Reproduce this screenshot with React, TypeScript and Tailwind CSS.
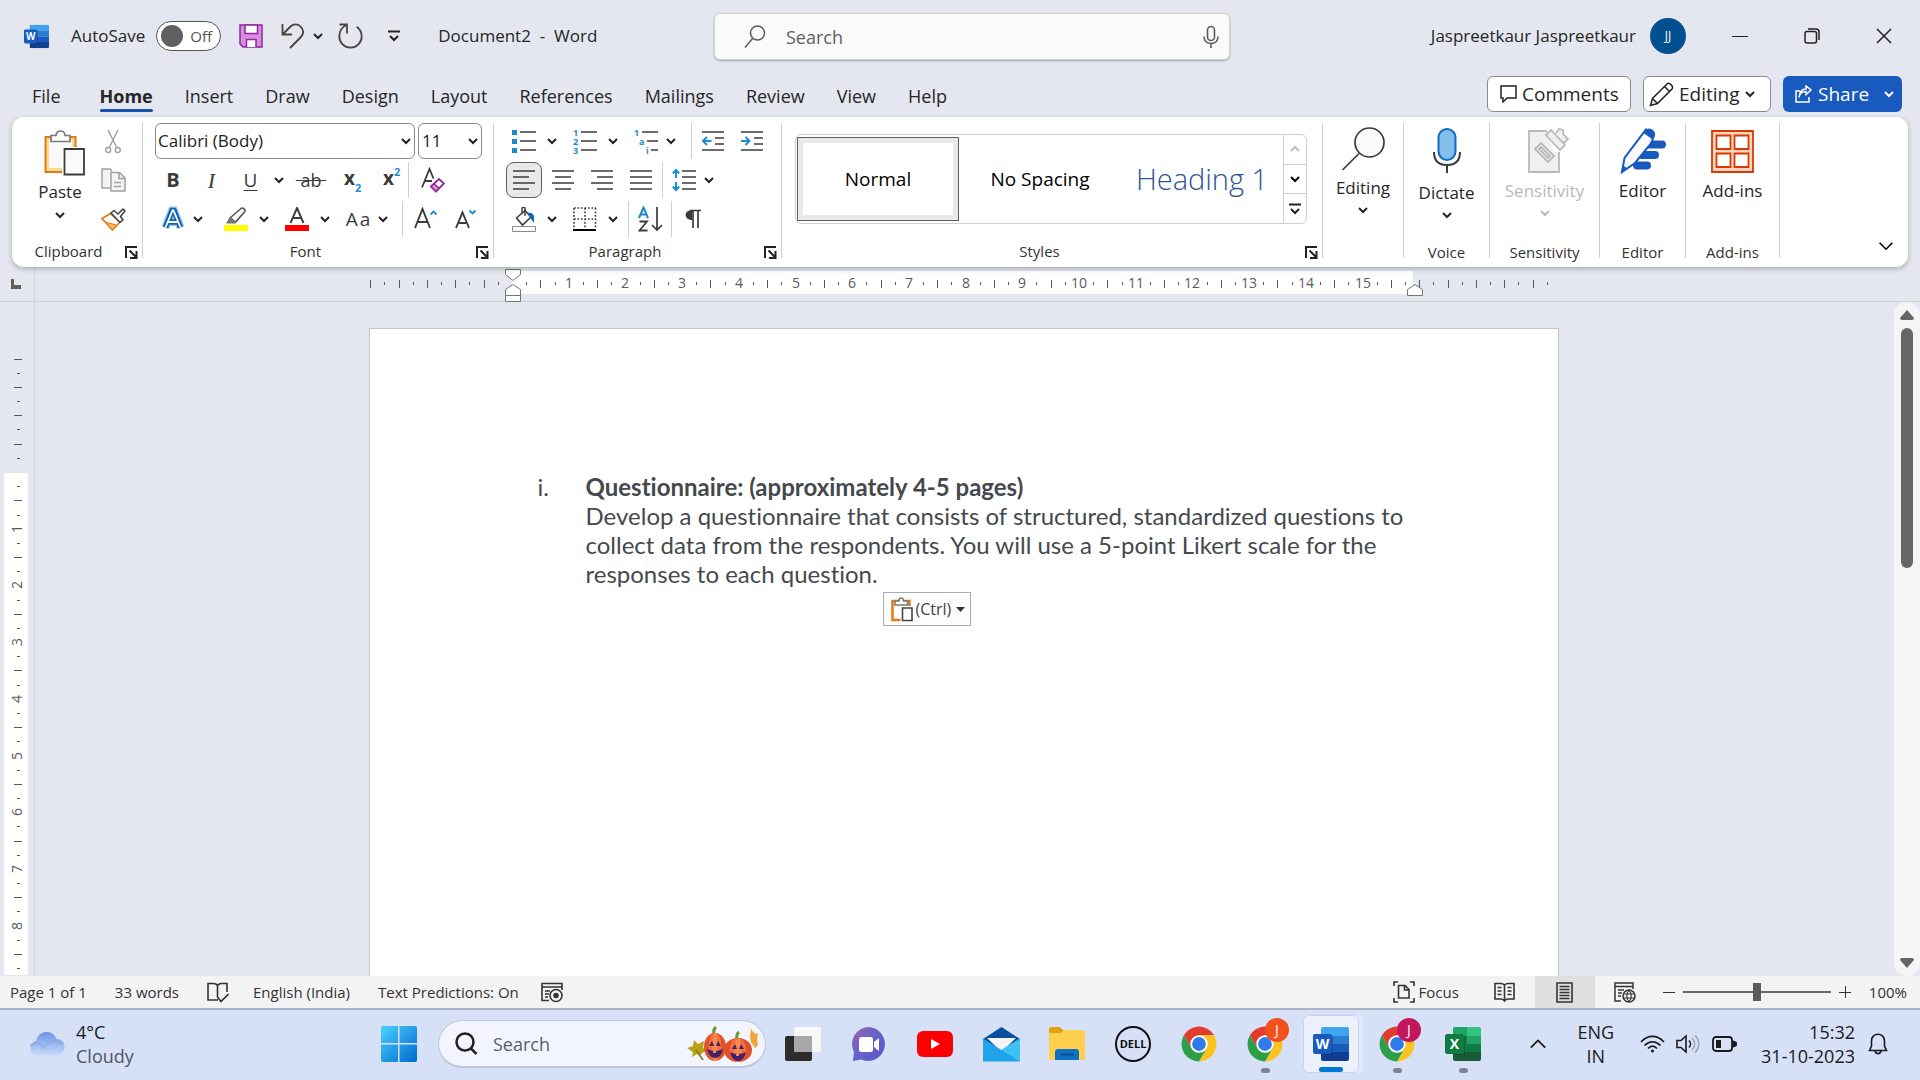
import { useState, type ReactNode } from 'react';
import clsx from 'clsx';

const INK = '#3b3b3b';
const BLUE = '#1e8bcd';

const tabs = [
  'File',
  'Home',
  'Insert',
  'Draw',
  'Design',
  'Layout',
  'References',
  'Mailings',
  'Review',
  'View',
  'Help',
];

/* ---------- small building blocks ---------- */

function Chevron({ className = '', size = 10, up = false, width = 2 }: { className?: string; size?: number; up?: boolean; width?: number }) {
  return (
    <svg
      className={clsx('shrink-0', className)}
      width={size}
      height={size}
      viewBox="0 0 10 10"
      fill="none"
      stroke="currentColor"
      strokeWidth={width}
    >
      <path d={up ? 'M1 7l4-4 4 4' : 'M1 3l4 4 4-4'} />
    </svg>
  );
}

function Tool({ label, className = 'w-9', children }: { label: string; className?: string; children: ReactNode }) {
  return (
    <button
      type="button"
      aria-label={label}
      className={clsx('flex h-9 shrink-0 items-center justify-center rounded-lg text-[#3b3b3b] hover:bg-gray-100', className)}
    >
      {children}
    </button>
  );
}

function More({ label, className = 'w-5' }: { label: string; className?: string }) {
  return (
    <button type="button" aria-label={label} className={clsx('flex h-9 shrink-0 items-center justify-center text-[#222]', className)}>
      <Chevron />
    </button>
  );
}

function Rule({ className = '' }: { className?: string }) {
  return <span className={clsx('h-9 w-px shrink-0 bg-[#d0d0d0]', className)} />;
}

function Launcher({ label }: { label: string }) {
  return (
    <button type="button" aria-label={label} className="mr-1 shrink-0">
      <svg width="13" height="13" viewBox="0 0 13 13" fill="none" stroke="#222" strokeWidth="2">
        <path d="M1 12V1h11M4.500 4.500l6.500 6.500M11.500 5v7H5" />
      </svg>
    </button>
  );
}

function Group({
  title,
  className,
  labelClass,
  launcher,
  children,
}: {
  title?: string;
  className: string;
  labelClass?: string;
  launcher?: boolean;
  children: ReactNode;
}) {
  return (
    <section className={clsx('flex shrink-0 flex-col border-r border-[#d0d0d0]', className)}>
      <div className="flex-1">{children}</div>
      <div className="flex h-3 items-center">
        <span className={clsx('flex-1 text-center text-[15px] leading-3 text-[#333]', labelClass)}>{title}</span>
        {launcher && <Launcher label={`${title} settings`} />}
      </div>
    </section>
  );
}

/* ---------- logos ---------- */

function OfficeLogo({ size, letter }: { size: number; letter: 'W' | 'X' }) {
  const word = letter === 'W';
  const c = word ? ['#41a5ee', '#2b7cd3', '#185abd', '#103f91'] : ['#33c481', '#21a366', '#107c41', '#185c37'];
  return (
    <svg width={size} height={size} viewBox="0 0 36 36">
      <clipPath id={`sheet${letter}${size}`}>
        <rect x="8" y="1" width="28" height="34" rx="2" />
      </clipPath>
      <g clipPath={`url(#sheet${letter}${size})`}>
        <rect x="8" y="1" width="28" height="9" fill={c[0]} />
        <rect x="8" y="10" width="28" height="8" fill={c[1]} />
        <rect x="8" y="18" width="28" height="8" fill={c[2]} />
        <rect x="8" y="26" width="28" height="9" fill={c[3]} />
        {!word && <rect x="8" y="1" width="14" height="9" fill="#21a366" />}
        {!word && <rect x="8" y="10" width="14" height="16" fill="#107c41" />}
        <rect x="8" y="9" width="12" height="20" fill="#000" opacity=".2" />
      </g>
      <rect x="0" y="8" width="19" height="20" rx="2" fill={word ? '#185abd' : '#107c41'} />
      <text x="9.500" y="23" textAnchor="middle" fontSize="14" fontWeight="700" fill="#fff" fontFamily="Open Sans, sans-serif">
        {letter}
      </text>
    </svg>
  );
}

function ChromeLogo({ badge }: { badge?: string }) {
  return (
    <span className="relative block">
      <svg width="38" height="38" viewBox="0 0 48 48">
        <path fill="#e33b2e" d="M4.950 13A22 22 0 0 1 43.050 13H24L14.470 29.500Z" />
        <path fill="#fcc31e" d="M43.050 13A22 22 0 0 1 24 46L33.530 29.500 24 13Z" />
        <path fill="#2c9f47" d="M24 46A22 22 0 0 1 4.950 13L14.470 29.500H33.530Z" />
        <circle cx="24" cy="24" r="11" fill="#fff" />
        <circle cx="24" cy="24" r="8.700" fill="#2f7bee" />
      </svg>
      {badge && (
        <span
          className={clsx(
            'absolute -top-[7px] left-[19px] flex size-6 items-center justify-center rounded-full text-sm text-white',
            badge
          )}
        >
          J
        </span>
      )}
    </span>
  );
}

function Pumpkin({ x, y, rx, ry }: { x: number; y: number; rx: number; ry: number }) {
  return (
    <g>
      <path d={`M${x - 1} ${y - ry + 2}q-1-6 2-8`} stroke="#6a9a2b" strokeWidth="3" fill="none" />
      <ellipse cx={x} cy={y} rx={rx} ry={ry} fill="#e2502a" />
      <ellipse cx={x} cy={y} rx={rx * 0.6} ry={ry} fill="#f26f3c" />
      <ellipse cx={x} cy={y} rx={rx * 0.25} ry={ry} fill="#fa8a50" />
      <path d={`M${x - 6} ${y - 1}l3-5 2 5zM${x + 6} ${y - 1}l-3-5-2 5zM${x - 8} ${y + 2}q8 4 16 0-2 9-8 9t-8-9z`} fill="#47206b" />
      <path d={`M${x - 2} ${y + 4}h3v2h-3z`} fill="#fa8a50" />
    </g>
  );
}

/* ---------- title bar and tabs ---------- */

function TitleBar() {
  return (
    <header className="grid h-[72px] grid-cols-[1fr_516px_1fr] pl-6 text-[17px] text-[#262626]">
      <div className="flex h-[72px] items-center">
        <OfficeLogo size={25} letter="W" />
        <label className="ml-[22px] flex items-center gap-[11px]">
          AutoSave
          <input type="checkbox" className="peer sr-only" />
          <span className="flex h-[30px] w-[65px] items-center gap-[7px] rounded-full border border-[#555] bg-white pl-1 text-[15px] text-[#555]">
            <span className="size-[22px] rounded-full bg-[#606060]" />
            Off
          </span>
        </label>
        <button type="button" aria-label="Save" className="ml-[18px]">
          <svg width="24" height="24" viewBox="0 0 24 24" stroke="#9424a0" strokeWidth="1.500">
            <path d="M1 1h22v22H4l-3-3z" fill="#d68fdc" />
            <path d="M6 1h12.500v8.500H6z" fill="#fff" />
            <path d="M7.500 23v-7.500H17V23" fill="#fff" />
          </svg>
        </button>
        <button type="button" aria-label="Undo" className="ml-[18px] text-[#444]">
          <svg width="24" height="26" viewBox="0 0 24 26" fill="none" stroke="currentColor" strokeWidth="1.800">
            <path d="M1.500 1v10.500H11M2 11l7.500-7.500C12.500 .800 17 .500 20 4c3 3.500 2.500 7.500-.500 10.500L9 25" />
          </svg>
        </button>
        <button type="button" aria-label="Undo history" className="ml-2">
          <Chevron />
        </button>
        <button type="button" aria-label="Redo" className="ml-[15px] text-[#444]">
          <svg width="25" height="26" viewBox="0 0 25 26" fill="none" stroke="currentColor" strokeWidth="1.800">
            <path d="M1.500 1.500H9v9M9 1.800C4 4 1.300 8.500 1.300 13.500a11.200 11.200 0 0 0 22.400 0c0-4-2-7.500-5-9.700" />
          </svg>
        </button>
        <button type="button" aria-label="Customize toolbar" className="ml-[25px]">
          <svg width="12" height="12" viewBox="0 0 12 12" fill="none" stroke="#222" strokeWidth="2">
            <path d="M0 1.500h12M2 6l4 4 4-4" />
          </svg>
        </button>
        <span className="ml-[38px] whitespace-pre">Document2  -  Word</span>
      </div>
      <label className="mt-[13px] flex h-[47px] items-center rounded-md border border-[#d2d2d6] bg-[#fafafa] pl-[29px] pr-[10px] shadow-[0_1px_2px_rgba(0,0,0,0.3)]">
        <svg width="22" height="24" viewBox="0 0 22 24" fill="none" stroke="#5c5c5c" strokeWidth="1.500">
          <circle cx="13.500" cy="8" r="7" />
          <path d="M8.500 13.500L1 22.500" />
        </svg>
        <input
          type="text"
          aria-label="Search"
          placeholder="Search"
          className="ml-5 min-w-0 flex-1 bg-transparent text-lg outline-none placeholder:text-[#616161]"
        />
        <button type="button" aria-label="Dictate a search">
          <svg width="16" height="24" viewBox="0 0 16 24" fill="none" stroke="#5c5c5c" strokeWidth="1.600">
            <rect x="4.500" y="1.500" width="7" height="14" rx="3.500" />
            <path d="M1 11.500c0 4.500 3 7 7 7s7-2.500 7-7M8 18.500V23" />
          </svg>
        </button>
      </label>
      <div className="flex h-[72px] items-center justify-end">
        <span>Jaspreetkaur Jaspreetkaur</span>
        <button type="button" className="ml-[14px] mr-[18px] size-9 rounded-full bg-[#00508f] text-xs text-white">
          JJ
        </button>
        <button type="button" aria-label="Minimize" className="flex h-full w-[72px] items-center justify-center">
          <span className="h-px w-4 bg-[#222]" />
        </button>
        <button type="button" aria-label="Restore" className="flex h-full w-[72px] items-center justify-center">
          <svg width="16" height="16" viewBox="0 0 16 16" fill="none" stroke="#222" strokeWidth="1.500">
            <rect x="1" y="3.500" width="11.500" height="11.500" rx="2" />
            <path d="M4 1h8c2 0 3 1 3 3v8" />
          </svg>
        </button>
        <button type="button" aria-label="Close" className="flex h-full w-[72px] items-center justify-center">
          <svg width="16" height="16" viewBox="0 0 16 16" stroke="#222" strokeWidth="1.500">
            <path d="M1 1l14 14M15 1L1 15" />
          </svg>
        </button>
      </div>
    </header>
  );
}

function TabRow({ active, onSelect }: { active: string; onSelect: (tab: string) => void }) {
  return (
    <div className="flex h-[45px] items-start justify-between pl-4 pr-[18px] text-[#262626]">
      <nav className="flex pt-3 text-lg">
        {tabs.map((tab) => (
          <button
            key={tab}
            type="button"
            onClick={() => onSelect(tab)}
            className={clsx('px-4 leading-6', tab === 'File' && 'mr-[7px]', tab === active && 'font-bold')}
          >
            {tab}
            <span className={clsx('mt-px block h-[3px] rounded-full', tab === active && 'bg-[#1753ad]')} />
          </button>
        ))}
      </nav>
      <div className="flex gap-3 pt-1 text-[19px]">
        <button type="button" className="flex h-9 w-36 items-center gap-1 rounded-md border border-[#8a8a8a] bg-white pl-3">
          <svg width="18" height="18" viewBox="0 0 18 18" fill="none" stroke="#222" strokeWidth="1.500">
            <path d="M1 1h15v12H7l-4 4v-4H1z" />
          </svg>
          Comments
        </button>
        <button type="button" className="flex h-9 w-32 items-center gap-[5px] rounded-md border border-[#8a8a8a] bg-white pl-[5px]">
          <svg width="25" height="25" viewBox="0 0 25 25" fill="none" stroke="#222" strokeWidth="1.500">
            <path d="M1.500 23.500l2-7L18 2c2-2 7 2 5 5L8.500 21.500zM15.500 4.500l5 5M3.500 16.500l5 5" />
          </svg>
          Editing
          <Chevron />
        </button>
        <button type="button" className="flex h-9 w-[119px] items-center gap-[6px] rounded-md bg-[#185abd] pl-3 text-white">
          <svg width="17" height="18" viewBox="0 0 17 18" fill="none" stroke="currentColor" strokeWidth="1.500">
            <path d="M5 6H1v11h13v-5" />
            <path d="M4 12.500c.500-4 3-6 7-6V9.500l5-4.500-5-4v3C7 4 4.500 7 4 12.500z" />
          </svg>
          Share
          <Chevron className="ml-[9px]" />
        </button>
      </div>
    </div>
  );
}

/* ---------- ribbon ---------- */

function ClipboardGroup() {
  return (
    <Group title="Clipboard" launcher className="w-[131px]" labelClass="pb-[2px]">
      <div className="flex pl-[9px]">
        <button type="button" className="flex w-[78px] flex-col items-center pt-[7px] text-[17px] text-[#262626]">
          <svg className="ml-2" width="41" height="46" viewBox="0 0 41 46">
            <path d="M1.500 7h30v35h-30z" fill="#fbdb8f" stroke="#e07a17" strokeWidth="2" />
            <path d="M5 10h23v28H5z" fill="#fafafa" />
            <path d="M7 11.500V5.500h5c0-6 9-6 9 0h5v6z" fill="#fff" stroke="#7a7a7a" strokeWidth="1.700" />
            <path d="M18 17h23v29H18z" fill="#fff" />
            <path d="M20.500 19h19.500v25.500H20.500z" fill="#fafafa" stroke="#3b3b3b" strokeWidth="1.800" />
          </svg>
          <span className="mt-1 leading-6">Paste</span>
          <Chevron className="mt-[6px]" />
        </button>
        <div className="ml-px flex w-[26px] flex-col gap-[3px]">
          <Tool label="Cut" className="w-[26px]">
            <svg width="16" height="25" viewBox="0 0 16 25" fill="none" stroke="#a0a0a0" strokeWidth="1.500">
              <path d="M3 1l8.500 17M13 1L4.500 18" />
              <circle cx="3.200" cy="21" r="2.500" />
              <circle cx="12.800" cy="21" r="2.500" />
            </svg>
          </Tool>
          <Tool label="Copy" className="w-[26px]">
            <svg width="25" height="24" viewBox="0 0 25 24" fill="#f4f4f4" stroke="#a0a0a0" strokeWidth="1.500">
              <path d="M9 20H1V1h8l2 2" />
              <path d="M10 4.500h8.500L24 10v13H10z" />
              <path d="M18 5v5.500h5.500M13 14.500h7M13 18.500h7" fill="none" />
            </svg>
          </Tool>
          <Tool label="Format Painter" className="w-[26px]">
            <svg width="25" height="23" viewBox="0 0 25 23" strokeLinejoin="round">
              <path d="M9.500 5.500L1 10.500l10.500 11.500 7.500-8z" fill="#fff" stroke="#e07a17" strokeWidth="1.700" />
              <path d="M4 14l11.500 3-4 4.500z" fill="#f9b75e" stroke="#e07a17" />
              <path d="M10 5l3-2.500 4 3.500 5-5 2 2-4.500 5.500L22 12l-3 2.500z" fill="#fff" stroke="#444" strokeWidth="1.600" />
            </svg>
          </Tool>
        </div>
      </div>
    </Group>
  );
}

function FontGroup() {
  return (
    <Group title="Font" launcher className="w-[351px]" labelClass="pb-[2px] pr-2">
      <div className="flex flex-col gap-[3px]">
        <div className="flex gap-[3px] pl-3 text-[17px] text-[#222]">
          <label className="relative flex h-9 w-[260px] items-center">
            <select aria-label="Font" className="h-9 w-full appearance-none rounded-md border border-[#8a8a8a] bg-white pl-[2px]">
              <option>Calibri (Body)</option>
            </select>
            <Chevron className="pointer-events-none absolute right-1" />
          </label>
          <label className="relative flex h-9 w-16 items-center">
            <select aria-label="Font size" className="h-9 w-full appearance-none rounded-md border border-[#8a8a8a] bg-white pl-[3px]">
              <option>11</option>
            </select>
            <Chevron className="pointer-events-none absolute right-1" />
          </label>
        </div>
        <div className="flex pl-[11px]">
          <Tool label="Bold" className="w-[38px] text-xl font-bold">
            B
          </Tool>
          <Tool label="Italic" className="w-[39px] font-['Liberation_Serif',serif] text-[22px] italic">
            I
          </Tool>
          <Tool label="Underline" className="w-[39px] text-[19px] underline underline-offset-3">
            U
          </Tool>
          <More label="Underline styles" className="w-[18px]" />
          <Tool label="Strikethrough" className="ml-[3px] w-10 text-lg">
            <span className="line-through">&nbsp;ab&nbsp;</span>
          </Tool>
          <Tool label="Subscript" className="w-[39px] pl-1">
            <svg className="overflow-visible" width="18" height="26" viewBox="0 0 18 26" fontWeight="700" fontFamily="Open Sans, sans-serif">
              <text x="0" y="18" fontSize="19" fill={INK}>x</text>
              <text x="11" y="25" fontSize="11" fill={BLUE}>2</text>
            </svg>
          </Tool>
          <Tool label="Superscript" className="w-[38px] pl-[6px]">
            <svg className="overflow-visible" width="18" height="26" viewBox="0 0 18 26" fontWeight="700" fontFamily="Open Sans, sans-serif">
              <text x="0" y="18" fontSize="19" fill={INK}>x</text>
              <text x="11" y="9" fontSize="11" fill={BLUE}>2</text>
            </svg>
          </Tool>
          <Rule />
          <Tool label="Clear formatting" className="w-11 pl-[3px]">
            <svg width="24" height="26" viewBox="0 0 24 26" fill="none">
              <path d="M1 20.500L8.500 2l4 9.500M4 14h7" stroke={INK} strokeWidth="1.800" />
              <path d="M10 19.500l8-7.500 5 4.500-8 8z" fill="#fff" stroke="#9424a0" strokeWidth="1.800" />
              <path d="M10 19.500l3-2.800 5 4.600-3 3.200z" fill="#d68fdc" stroke="#9424a0" strokeWidth="1.500" />
            </svg>
          </Tool>
        </div>
        <div className="flex pl-[11px]">
          <Tool label="Text effects" className="w-[38px]">
            <svg width="26" height="26" viewBox="0 0 26 26" fill="none">
              <path d="M5.500 21.500L12 4.500h2l6.500 17M8.500 16h9" stroke="#9cc9f0" strokeWidth="8" />
              <path d="M5.500 21.500L12 4.500h2l6.500 17M8.500 16h9" stroke="#1264b0" strokeWidth="5.500" />
              <path d="M5.500 21.500L12.500 4.500h1l7 17M8.500 16h9" stroke="#fff" strokeWidth="1.800" />
            </svg>
          </Tool>
          <More label="Text effect styles" className="w-3" />
          <Tool label="Highlight" className="ml-[14px] w-9">
            <svg width="24" height="24" viewBox="0 0 24 24" fill="none">
              <path d="M6 11L17 1.500c2-1.500 5 1.500 3.500 3.500L11.500 15c-3 1.500-6-1-5.500-4z" stroke="#555" strokeWidth="1.600" />
              <path d="M6 9.500l7 5.500-2 1.500H2z" fill="#777" />
              <path d="M0 18h24v6H0z" fill="#ff0" />
            </svg>
          </Tool>
          <More label="Highlight colors" />
          <Tool label="Font color" className="ml-[5px] w-9">
            <svg width="24" height="24" viewBox="0 0 24 24" fill="none">
              <path d="M5.500 16L12 1l6.500 15M8 11h8" stroke={INK} strokeWidth="1.900" />
              <path d="M0 18h24v6H0z" fill="#f00" />
            </svg>
          </Tool>
          <More label="Font colors" />
          <Tool label="Change case" className="ml-[5px] w-9 text-[19px]">
            <span className="flex gap-[2px]">
              <span>A</span>
              <span>a</span>
            </span>
          </Tool>
          <More label="Case options" className="w-[14px]" />
          <Rule className="ml-3" />
          <Tool label="Grow font" className="ml-1 w-[38px]">
            <svg width="24" height="24" viewBox="0 0 24 24" fill="none" strokeWidth="1.900">
              <path d="M1 21L8.500 2 16 21M4 15h9" stroke={INK} />
              <path d="M16.500 7.500L19.500 4.500l3 3" stroke={BLUE} />
            </svg>
          </Tool>
          <Tool label="Shrink font" className="w-[42px]">
            <svg width="22" height="24" viewBox="0 0 22 24" fill="none" strokeWidth="1.900">
              <path d="M1 21L7.500 5.500 14 21M4 16h7" stroke={INK} />
              <path d="M14.500 3.500l3 3 3-3" stroke={BLUE} />
            </svg>
          </Tool>
        </div>
      </div>
    </Group>
  );
}

function Lines({ d }: { d: string }) {
  return (
    <svg width="22" height="22" viewBox="0 0 22 22" stroke={INK} strokeWidth="1.700">
      <path d={d} />
    </svg>
  );
}

function ParagraphGroup() {
  return (
    <Group title="Paragraph" launcher className="w-72" labelClass="pb-[2px] pr-2">
      <div className="flex flex-col gap-[3px] pl-3">
        <div className="flex">
          <Tool label="Bullets">
            <svg width="24" height="24" viewBox="0 0 24 24">
              <path d="M0 1h5v5H0zM0 10h5v5H0zM0 19h5v5H0z" fill={BLUE} />
              <path d="M8 3h16M8 12h16M8 21h16" stroke={INK} strokeWidth="1.700" />
            </svg>
          </Tool>
          <More label="Bullet library" />
          <Tool label="Numbering" className="ml-[5px] w-9">
            <svg className="overflow-visible" width="24" height="25" viewBox="0 0 24 25" fontFamily="Open Sans, sans-serif" fontSize="9" fontWeight="700" fill={BLUE}>
              <text x="0" y="7">1</text>
              <text x="0" y="16">2</text>
              <text x="0" y="25">3</text>
              <path d="M8 3h16M8 12h16M8 21h16" stroke={INK} strokeWidth="1.700" />
            </svg>
          </Tool>
          <More label="Numbering library" />
          <Tool label="Multilevel list" className="ml-[5px] w-9">
            <svg className="overflow-visible" width="24" height="25" viewBox="0 0 24 25" fontFamily="Open Sans, sans-serif" fontSize="9" fontWeight="700" fill={BLUE}>
              <text x="0" y="7">1</text>
              <text x="5" y="16">a</text>
              <text x="12" y="25">i</text>
              <path d="M8 3h16M13 12h11M17 21h7" stroke={INK} strokeWidth="1.700" />
            </svg>
          </Tool>
          <More label="List library" className="w-[14px]" />
          <Rule className="ml-[13px]" />
          <Tool label="Decrease indent" className="ml-[3px] w-9">
            <svg width="22" height="22" viewBox="0 0 22 22" fill="none" stroke={INK} strokeWidth="1.700">
              <path d="M0 2h22M13 8h9M13 14h9M0 20h22" />
              <path d="M9.500 11H1.500M5 7l-4 4 4 4" stroke={BLUE} strokeWidth="2" />
            </svg>
          </Tool>
          <Tool label="Increase indent" className="ml-[3px] w-9">
            <svg width="22" height="22" viewBox="0 0 22 22" fill="none" stroke={INK} strokeWidth="1.700">
              <path d="M0 2h22M13 8h9M13 14h9M0 20h22" />
              <path d="M0 11h8M4.500 7l4 4-4 4" stroke={BLUE} strokeWidth="2" />
            </svg>
          </Tool>
        </div>
        <div className="flex">
          <Tool label="Align left" className="w-9 border border-[#5f5f5f] bg-[#e9e9e9]">
            <Lines d="M0 2h22M0 8h16M0 14h22M0 20h16" />
          </Tool>
          <Tool label="Center" className="ml-[3px] w-9">
            <Lines d="M0 2h22M3 8h16M0 14h22M3 20h16" />
          </Tool>
          <Tool label="Align right" className="ml-[3px] w-9">
            <Lines d="M0 2h22M6 8h16M0 14h22M6 20h16" />
          </Tool>
          <Tool label="Justify" className="ml-[3px] w-9">
            <Lines d="M0 2h22M0 8h22M0 14h22M0 20h22" />
          </Tool>
          <Rule className="ml-[3px]" />
          <Tool label="Line spacing" className="ml-[3px] w-9">
            <svg width="24" height="24" viewBox="0 0 24 24" fill="none" stroke={INK} strokeWidth="1.700">
              <path d="M10 3h14M10 9h14M10 15h14M10 21h14" />
              <path d="M4 10V2.500M.800 5.500L4 2l3.200 3.500M4 14v7.500M.800 18.500L4 22l3.200-3.500" stroke={BLUE} strokeWidth="2" />
            </svg>
          </Tool>
          <More label="Spacing options" className="w-[14px]" />
        </div>
        <div className="flex">
          <Tool label="Shading">
            <svg width="24" height="25" viewBox="0 0 24 25" fill="none">
              <path d="M4.500 11L13 3.500l6 6.500-8.500 8z" stroke={INK} strokeWidth="1.600" />
              <path d="M10 7V1.500c0-1.500 3-1.500 3 0V9" stroke={INK} strokeWidth="1.400" />
              <path d="M15 6c4-1 7 1 7 4v6l-3-4z" fill="#1264b0" />
              <path d="M.500 19.500h23v5H.500z" fill="#fff" stroke="#8a8a8a" />
            </svg>
          </Tool>
          <More label="Shading colors" />
          <Tool label="Borders" className="ml-[5px] w-9">
            <svg width="24" height="24" viewBox="0 0 24 24" fill="none" stroke={INK} strokeWidth="1.600">
              <path d="M1 1v20M12 1v20M22.500 1v20M1 1h22M1 12h22" strokeDasharray="1.700 1.800" />
              <path d="M0 23h23" stroke="#000" strokeWidth="2" />
            </svg>
          </Tool>
          <More label="Border options" />
          <Rule className="ml-[5px]" />
          <Tool label="Sort" className="ml-[3px] w-9">
            <svg width="25" height="26" viewBox="0 0 25 26" fill="none" strokeWidth="2">
              <path d="M1 12L5.500 1.500 10 12M3 8.500h5.500" stroke={BLUE} />
              <path d="M1.500 15.500H9L1.500 24.500h8" stroke={INK} strokeWidth="1.800" />
              <path d="M19 1v23M14 19l5 5 5-5" stroke={INK} strokeWidth="1.700" />
            </svg>
          </Tool>
          <Rule className="ml-[3px]" />
          <Tool label="Show formatting marks" className="ml-[3px] w-9">
            <svg width="16" height="20" viewBox="0 0 16 20">
              <path d="M7 1C-1.500 1-1.500 11 7 11z" fill={INK} />
              <path d="M5.500 1.500H16M8 1.500V19M13 1.500V19" stroke={INK} strokeWidth="1.700" />
            </svg>
          </Tool>
        </div>
      </div>
    </Group>
  );
}

function StylesGroup() {
  return (
    <Group title="Styles" launcher className="w-[541px]" labelClass="pb-[2px] pr-2">
      <div className="ml-[13px] mt-[11px] flex h-[90px] w-[512px] rounded-md border border-[#d0d0d0] text-black">
        <div className="flex flex-1 items-center pl-px">
          <button type="button" className="h-[84px] w-[162px] border border-[#5f5f5f] bg-white text-[19px] ring-[5px] ring-[#e9e9e9] ring-inset">
            Normal
          </button>
          <button type="button" className="h-[84px] w-[162px] text-[19px]">
            No Spacing
          </button>
          <button type="button" className="h-[84px] w-[162px] text-[29px] font-light text-[#2f5496]">
            Heading 1
          </button>
        </div>
        <div className="flex w-[23px] flex-col divide-y divide-[#d0d0d0] border-l border-[#d0d0d0]">
          <button type="button" aria-label="Scroll up" className="flex flex-1 items-center justify-center text-[#bdbdbd]">
            <Chevron up />
          </button>
          <button type="button" aria-label="Scroll down" className="flex flex-1 items-center justify-center">
            <Chevron />
          </button>
          <button type="button" aria-label="More styles" className="flex flex-1 items-center justify-center">
            <svg width="12" height="12" viewBox="0 0 12 12" fill="none" stroke="#222" strokeWidth="2">
              <path d="M0 1.500h12M2 6l4 4 4-4" />
            </svg>
          </button>
        </div>
      </div>
    </Group>
  );
}

function BigTool({ label, chevron, disabled, children }: { label: string; chevron?: boolean; disabled?: boolean; children: ReactNode }) {
  return (
    <button
      type="button"
      disabled={disabled}
      className="flex w-full flex-col items-center pt-1 text-[17px] text-[#262626] disabled:text-[#b9b9b9]"
    >
      {children}
      <span className="mt-1 leading-6">{label}</span>
      {chevron && <Chevron className="mt-[5px]" />}
    </button>
  );
}

function Ribbon() {
  return (
    <div className="relative z-10 mx-3 flex h-[150px] rounded-xl bg-white pb-[9px] pt-[6px] shadow-[0_2px_5px_rgba(0,0,0,0.25)]">
      <ClipboardGroup />
      <FontGroup />
      <ParagraphGroup />
      <StylesGroup />
      <Group className="w-[81px]">
        <BigTool label="Editing" chevron>
          <svg width="45" height="45" viewBox="0 0 45 45" fill="#fafafa" stroke={INK} strokeWidth="1.700">
            <circle cx="28.500" cy="15.500" r="14.500" />
            <path d="M18 26.500L1.500 43" />
          </svg>
        </BigTool>
      </Group>
      <Group title="Voice" className="w-[86px]">
        <BigTool label="Dictate" chevron>
          <svg width="28" height="50" viewBox="0 0 28 50" fill="none" stroke={INK} strokeWidth="2">
            <rect x="5.500" y="2" width="17" height="31" rx="8.500" fill="#83beec" stroke="#0f6cbd" />
            <path d="M1 25c0 9 5 13 13 13s13-4 13-13M14 38v8" />
          </svg>
        </BigTool>
      </Group>
      <Group title="Sensitivity" className="w-[110px]">
        <BigTool label="Sensitivity" chevron disabled>
          <svg className="ml-2" width="41" height="48" viewBox="0 0 41 48" fill="#f0f0f0" stroke="#b9b9b9" strokeWidth="1.800">
            <path d="M1 4h30v41H1z" />
            <path d="M18 1h23v24H26z" fill="#fff" stroke="none" />
            <path d="M7 22l6-6 13 13-6 6z" />
            <path d="M11 22l2-2 9 9-2 2z" />
            <path d="M18 8l5-5 14 15-5 5zM28 6l3-4 4 1v4l5 5-4 4" />
          </svg>
        </BigTool>
      </Group>
      <Group title="Editor" className="w-[86px]">
        <BigTool label="Editor">
          <svg width="46" height="48" viewBox="0 0 46 48">
            <path d="M28 17.500h14M22 28h13M17 38.500h10" stroke="#185abd" strokeWidth="8" strokeLinecap="round" />
            <path d="M26 2.500l8 6-3 8L15 36 2 45l2.500-14z" fill="#fafafa" stroke="#185abd" strokeWidth="2" />
            <path d="M27 2c3-2 9 2 8 6l-3 4-8.500-6zM1 46l1.500-8 5 3.500z" fill="#185abd" />
          </svg>
        </BigTool>
      </Group>
      <Group title="Add-ins" className="w-[94px]">
        <BigTool label="Add-ins">
          <svg width="43" height="48" viewBox="0 0 43 48" fill="#fff" stroke="#d83b01" strokeWidth="1.800">
            <path d="M1 4h41v41H1z" fill="#fbd5c4" />
            <path d="M5.500 8.500h14v13.500h-14zM23.500 8.500h14v13.500h-14zM5.500 26.500h14V40h-14zM23.500 26.500h14V40h-14z" />
          </svg>
        </BigTool>
      </Group>
      <div className="flex flex-1 items-end justify-end pb-1 pr-[14px]">
        <button type="button" aria-label="Collapse the ribbon">
          <Chevron size={16} width={1} />
        </button>
      </div>
    </div>
  );
}

/* ---------- rulers, page, scroll bar ---------- */

const CM = 56.7;

function ticks(from: number, to: number) {
  return Array.from({ length: to - from + 1 }, (_, i) => from + i).filter((n) => n !== 0);
}

function TopRuler() {
  const zero = 143;
  return (
    <div className="flex h-[35px] border-b border-[#cfd3d6]">
      <div className="flex w-[35px] items-center border-r border-[#d3d5d8] pl-[11px]">
        <span className="size-[10px] border-b-4 border-l-[3px] border-[#5f5f5f]" />
      </div>
      <div className="flex flex-1 justify-center pr-7">
        <svg width="1190" height="34" viewBox="0 0 1190 34" fontFamily="Open Sans, sans-serif" fontSize="14" textAnchor="middle" className="overflow-visible">
          <rect x="143" y="4" width="901" height="23" fill="#fff" />
          {ticks(-10, 73).map((n) => {
            const x = Math.round(zero + (n * CM) / 4);
            if (n > 0 && n % 4 === 0 && n < 63)
              return (
                <text key={n} x={x} y="21" fill="#5a5a5a">
                  {n / 4}
                </text>
              );
            return n % 2 === 0 ? (
              <rect key={n} x={x} y="13" width="1" height="8" fill="#5a5a5a" />
            ) : (
              <rect key={n} x={x} y="15" width="1" height="3" fill="#5a5a5a" />
            );
          })}
          <g fill="#fff" stroke="#777">
            <path d="M136.500 2.500h15v5l-7.500 6-7.500-6z" />
            <path d="M136.500 34.500v-12l7.500-5 7.500 5v12zM136.500 28.500h15" />
            <path d="M1038.500 28.500v-6l7.500-5 7.500 5v6z" />
          </g>
        </svg>
      </div>
    </div>
  );
}

function SideRuler() {
  const zero = 170;
  return (
    <svg className="w-7 shrink-0" height="673" viewBox="0 0 28 673" fontFamily="Open Sans, sans-serif" fontSize="14" textAnchor="middle">
      <rect x="4" y="171" width="24" height="502" fill="#fff" />
      {ticks(-8, 35).map((n) => {
        const y = Math.round(zero + (n * CM) / 4);
        if (n > 0 && n % 4 === 0)
          return (
            <text key={n} transform={`translate(22 ${y}) rotate(-90)`} fill="#5a5a5a">
              {n / 4}
            </text>
          );
        return n % 2 === 0 ? (
          <rect key={n} x="14" y={y} width="8" height="1" fill="#5a5a5a" />
        ) : (
          <rect key={n} x="17" y={y} width="3" height="1" fill="#5a5a5a" />
        );
      })}
    </svg>
  );
}

function Workspace() {
  return (
    <main className="flex min-h-0 flex-1 overflow-hidden">
      <div className="w-[35px] shrink-0 overflow-hidden border-r border-[#d3d5d8]">
        <SideRuler />
      </div>
      <div className="flex min-w-0 flex-1 justify-center pr-[2px] pt-[26px]">
        <article className="w-[1190px] border border-b-0 border-[#c6c6c8] bg-white pl-[168px] pt-[143px] font-[Lato,sans-serif] text-[24px] leading-[29px] text-[#45494d] [font-variant-ligatures:none]">
          <div className="flex">
            <span className="w-12 shrink-0">i.</span>
            <div className="w-[840px]">
              <h1 className="font-bold">Questionnaire: (approximately 4-5 pages)</h1>
              <p>
                Develop a questionnaire that consists of structured, standardized questions to
                <br />
                collect data from the respondents. You will use a 5-point Likert scale for the
                <br />
                responses to each question.
              </p>
              <button
                type="button"
                className="ml-[297px] mt-1 flex h-[34px] w-[88px] items-center border border-[#ababab] bg-[#fdfdfd] pl-[7px] font-['Open_Sans',sans-serif] text-base text-[#444]"
              >
                <svg width="22" height="25" viewBox="0 0 22 25" fill="#fff">
                  <path d="M1.500 4h17v19h-17z" fill="#fff" stroke="#e07a17" strokeWidth="2.500" />
                  <path d="M4 8V4h4c0-4 4.500-4 4.500 0h4v4z" stroke="#777" strokeWidth="1.500" />
                  <path d="M9.500 9H22v16H9.500z" />
                  <path d="M11.500 11h9.500v12.500h-9.500z" stroke="#444" strokeWidth="1.600" />
                </svg>
                <span className="ml-[3px]">(Ctrl)</span>
                <svg className="ml-[5px]" width="9" height="5" viewBox="0 0 9 5">
                  <path d="M0 0h9L4.500 5z" fill="#333" />
                </svg>
              </button>
            </div>
          </div>
        </article>
      </div>
      <div className="flex w-[26px] shrink-0 flex-col items-center justify-between rounded-full bg-[#f5f5f5] py-2">
        <div className="flex flex-col items-center gap-2">
          <button type="button" aria-label="Scroll up">
            <svg className="block" width="14" height="10" viewBox="0 0 14 10">
              <path d="M7 0l7 8q0 2-2 2H2q-2 0-2-2z" fill="#666" />
            </svg>
          </button>
          <span className="h-60 w-3 rounded-full bg-[#666]" />
        </div>
        <button type="button" aria-label="Scroll down">
          <svg className="block" width="14" height="10" viewBox="0 0 14 10">
            <path d="M7 10l7-8q0-2-2-2H2Q0 0 0 2z" fill="#666" />
          </svg>
        </button>
      </div>
    </main>
  );
}

/* ---------- status bar ---------- */

function StatusBar() {
  const [zoom, setZoom] = useState(50);
  return (
    <footer className="flex h-[34px] shrink-0 items-center justify-between border-b-2 border-[#aab4c4] bg-[#f3f3f3] pl-[10px] pr-[13px] text-[15px] text-[#333]">
      <div className="flex items-center">
        <span>Page 1 of 1</span>
        <span className="ml-7">33 words</span>
        <svg className="ml-7" width="22" height="21" viewBox="0 0 22 21" fill="none" stroke="#333" strokeWidth="1.600">
          <path d="M10.500 3v12.500M11 18H1V1.500h5.500c2 0 3 .500 4 2 1-1.500 2-2 4-2H20V10M10.500 15l3.500 4.500 7.500-7.500" />
        </svg>
        <span className="ml-6">English (India)</span>
        <span className="ml-7">Text Predictions: On</span>
        <svg className="ml-[22px]" width="23" height="21" viewBox="0 0 23 21" fill="none" stroke="#333" strokeWidth="1.600">
          <path d="M8 18.500H1V1.500h20V8M1 5h20M4 9h5M4 12h4M4 15h3" />
          <circle cx="15" cy="13.500" r="6" />
          <circle cx="15" cy="13.500" r="2" fill="#333" />
        </svg>
      </div>
      <div className="flex h-full items-center">
        <button type="button" className="flex items-center gap-1">
          <svg width="22" height="22" viewBox="0 0 22 22" fill="none" stroke="#333" strokeWidth="1.600">
            <path d="M5 1H1v4M17 1h4v4M5 21H1v-4M17 21h4v-4M5.500 4.500h6.500l4 4V17H5.500zM11.500 4.500V9H16" />
          </svg>
          Focus
        </button>
        <button type="button" aria-label="Read mode" className="ml-4 flex h-full w-[60px] items-center justify-center">
          <svg width="21" height="20" viewBox="0 0 21 20" fill="none" stroke="#333" strokeWidth="1.600">
            <path d="M10.500 3v16M1 1.500h6c2 0 2.500.500 3.500 1.500 1-1 1.500-1.500 3.500-1.500h6V17h-6c-2 0-2.500 1-3.500 2-1-1-1.500-2-3.500-2H1zM3.500 5.500h4M3.500 9h4M3.500 12.500h4M13.500 5.500h4M13.500 9h4M13.500 12.500h4" />
          </svg>
        </button>
        <button type="button" aria-label="Print layout" className="flex h-full w-[60px] items-center justify-center bg-[#dfdfdf]">
          <svg width="17" height="21" viewBox="0 0 17 21" fill="none" stroke="#333" strokeWidth="1.600">
            <path d="M1 1h15v19H1zM3.500 4.500h10M3.500 7.500h10M3.500 10.500h10M3.500 13.500h10M3.500 16.500h10" />
          </svg>
        </button>
        <button type="button" aria-label="Web layout" className="flex h-full w-[60px] items-center justify-center">
          <svg width="22" height="21" viewBox="0 0 22 21" fill="none" stroke="#333" strokeWidth="1.500">
            <path d="M7 19H1V1h18v6M1 4.500h18M4 8h6M4 11h4M4 14h3" />
            <circle cx="15" cy="14" r="6" />
            <path d="M9 12h12M9 16h12M15 8c-3 4-3 8 0 12M15 8c3 4 3 8 0 12" strokeWidth="1.100" />
          </svg>
        </button>
        <button type="button" aria-label="Zoom out" className="ml-2 h-px w-3 bg-[#333]" />
        <input
          type="range"
          aria-label="Zoom"
          value={zoom}
          onChange={(e) => setZoom(Number(e.target.value))}
          className="mx-2 h-[18px] w-[148px] appearance-none bg-transparent [&::-webkit-slider-runnable-track]:h-[2px] [&::-webkit-slider-runnable-track]:bg-[#666] [&::-webkit-slider-thumb]:-mt-2 [&::-webkit-slider-thumb]:h-[18px] [&::-webkit-slider-thumb]:w-2 [&::-webkit-slider-thumb]:appearance-none [&::-webkit-slider-thumb]:bg-[#5c5c5c]"
        />
        <button type="button" aria-label="Zoom in">
          <svg width="12" height="12" viewBox="0 0 12 12" stroke="#333">
            <path d="M0 6.500h12M6.500 0v12" />
          </svg>
        </button>
        <span className="ml-[18px]">100%</span>
      </div>
    </footer>
  );
}

/* ---------- taskbar ---------- */

function TaskButton({ label, running, active, children }: { label: string; running?: boolean; active?: boolean; children: ReactNode }) {
  return (
    <button
      type="button"
      aria-label={label}
      className={clsx(
        'relative mx-[5px] flex h-[58px] w-14 items-center justify-center rounded-md',
        active && 'border border-[#c9d2ea] bg-[#edf1fb] shadow-[4px_0_0_#e2e9f8]'
      )}
    >
      {children}
      {active && <span className="absolute bottom-0 h-[5px] w-6 rounded-full bg-[#0078d7]" />}
      {running && <span className="absolute bottom-0 h-[5px] w-[9px] rounded-full bg-[#7c8494]" />}
    </button>
  );
}

function Taskbar() {
  return (
    <div className="grid h-[70px] shrink-0 grid-cols-[377px_1fr_auto] items-center bg-[#d6e1f7] pb-[2px] text-[#1a1a1a]">
      <div className="flex items-center gap-[11px] pl-7">
        <svg width="37" height="26" viewBox="0 0 37 26">
          <defs>
            <linearGradient id="cloud" x1="0" y1="0" x2="0" y2="1">
              <stop offset="0" stopColor="#6b93e6" />
              <stop offset="1" stopColor="#c8dcfa" />
            </linearGradient>
          </defs>
          <path d="M8 24.500a7.500 7.500 0 0 1 0-14.500C10 3.500 14 1 18.500 1S27 3.500 28.500 8c5 0 8 3.500 8 8s-3 8.500-8 8.500z" fill="url(#cloud)" />
          <path d="M2 15c5-5 11-4 13 2 4-6 14-9 20-4" fill="none" stroke="#7ea4ea" strokeWidth="2" opacity=".5" />
        </svg>
        <div className="text-lg leading-6">
          <div>4°C</div>
          <div className="text-[#4f5665]">Cloudy</div>
        </div>
      </div>
      <div className="flex items-center">
        <button type="button" aria-label="Start" className="ml-1">
          <svg width="36" height="36" viewBox="0 0 36 36">
            <defs>
              <linearGradient id="win" x1="0" y1="0" x2="1" y2="1">
                <stop offset="0" stopColor="#4cd0ff" />
                <stop offset="1" stopColor="#0069cf" />
              </linearGradient>
            </defs>
            <path d="M2 0h15v17H0V2Q0 0 2 0zM18.500 0H34q2 0 2 2v15H18.500zM0 18.500h17V36H2q-2 0-2-2zM18.500 18.500H36V34q0 2-2 2H18.500z" fill="url(#win)" />
          </svg>
        </button>
        <label className="ml-[21px] flex h-12 w-[328px] items-center rounded-full border border-b-2 border-[#bcc7de] bg-[#f2f5fd] pl-4 pr-[5px]">
          <svg width="23" height="23" viewBox="0 0 23 23" fill="none" stroke="#222" strokeWidth="2.500">
            <circle cx="10" cy="10" r="8.500" />
            <path d="M15.500 16l6 6" />
          </svg>
          <input
            type="text"
            aria-label="Search Windows"
            placeholder="Search"
            className="ml-[15px] min-w-0 flex-1 bg-transparent text-lg outline-none placeholder:text-[#5a5f69]"
          />
          <svg width="74" height="36" viewBox="0 0 74 36">
            <path d="M1 22l6-2 1-6 4 4 6-3-1 7 3 2-6 5-3-1-5 3 1-5z" fill="#b9a114" />
            <path d="M10 24l7 10" stroke="#8a7410" strokeWidth="1.500" />
            <Pumpkin x={29} y={21} rx={11} ry={14} />
            <Pumpkin x={52} y={24} rx={14} ry={12} />
            <path d="M65 3l3 4 4 1-1 6 1 5-3 3-4-6-1-6z" fill="#f0a43a" />
          </svg>
        </label>
        <div className="ml-1 flex">
          <TaskButton label="Task view">
            <svg width="36" height="36" viewBox="0 0 36 36">
              <rect x="0" y="10" width="27" height="25" rx="2" fill="#2c2c2c" />
              <rect x="9" y="1" width="27" height="25" rx="2" fill="#f8f8f8" />
              <path d="M9 10h18v16H11q-2 0-2-2z" fill="#a8a8a8" />
            </svg>
          </TaskButton>
          <TaskButton label="Chat">
            <svg width="34" height="36" viewBox="0 0 34 36">
              <defs>
                <linearGradient id="chat" x1="0" y1="0" x2="1" y2="1">
                  <stop offset="0" stopColor="#a565a0" />
                  <stop offset=".4" stopColor="#6a63c8" />
                  <stop offset="1" stopColor="#5a56cc" />
                </linearGradient>
              </defs>
              <path d="M17 1a17 17 0 1 1-8 32.500L1 35l1-9A17 17 0 0 1 17 1z" fill="url(#chat)" />
              <rect x="7" y="11" width="14" height="15" rx="2.500" fill="#fff" />
              <path d="M22 16l5-4v13l-5-4z" fill="#fff" />
            </svg>
          </TaskButton>
          <TaskButton label="YouTube">
            <svg width="36" height="26" viewBox="0 0 36 26">
              <rect width="36" height="26" rx="6" fill="#f00" />
              <path d="M14 8l9 5-9 5z" fill="#fff" />
            </svg>
          </TaskButton>
          <TaskButton label="Mail">
            <svg width="37" height="36" viewBox="0 0 37 36">
              <path d="M0 13L18.500 1 37 13l-9 9H9z" fill="#0a4f9e" />
              <path d="M4 12h29L18.500 26z" fill="#f4f4f6" />
              <path d="M0 12.500L18.500 24 37 12.500v23H0z" fill="#1fa4ea" />
              <path d="M37 12.500v23L18.500 24z" fill="#3cc3f4" />
            </svg>
          </TaskButton>
          <TaskButton label="File Explorer">
            <svg width="36" height="34" viewBox="0 0 36 34">
              <path d="M0 2q0-2 2-2h9l4 4-3 4H0z" fill="#e0a010" />
              <path d="M0 6h12l3-3h19q2 0 2 2v28H0z" fill="#ffd04e" />
              <path d="M6 33v-8q0-3 3-3h18q3 0 3 3v8z" fill="#0f71c4" />
              <path d="M11 27.500h14" stroke="#0a4f8e" strokeWidth="2" />
            </svg>
          </TaskButton>
          <TaskButton label="Dell">
            <svg width="36" height="36" viewBox="0 0 36 36">
              <circle cx="18" cy="18" r="17" fill="none" stroke="#111" strokeWidth="2" />
              <text x="18" y="22" textAnchor="middle" fontSize="11" fontWeight="700" fill="#111" fontFamily="Open Sans, sans-serif">
                DELL
              </text>
            </svg>
          </TaskButton>
          <TaskButton label="Chrome">
            <ChromeLogo />
          </TaskButton>
          <TaskButton label="Chrome, profile 1" running>
            <ChromeLogo badge="bg-[#f4511e]" />
          </TaskButton>
          <TaskButton label="Word" active>
            <OfficeLogo size={36} letter="W" />
          </TaskButton>
          <TaskButton label="Chrome, profile 2" running>
            <ChromeLogo badge="bg-[#c2185b]" />
          </TaskButton>
          <TaskButton label="Excel" running>
            <OfficeLogo size={36} letter="X" />
          </TaskButton>
        </div>
      </div>
      <div className="flex items-center pr-8 text-lg leading-6">
        <button type="button" aria-label="Hidden icons">
          <Chevron up size={18} width={1} />
        </button>
        <div className="ml-[30px] text-center">
          <div>ENG</div>
          <div>IN</div>
        </div>
        <svg className="ml-[26px]" width="25" height="18" viewBox="0 0 25 18" fill="none" stroke="#1a1a1a" strokeWidth="1.700">
          <path d="M1 7C8-.500 17-.500 24 7M4.500 10.500c5-5 11-5 16 0M8 13.500c3-3 6-3 9 0" />
          <circle cx="12.500" cy="16" r="1.500" fill="#1a1a1a" stroke="none" />
        </svg>
        <svg className="ml-[11px]" width="24" height="20" viewBox="0 0 24 20" fill="none" stroke="#1a1a1a" strokeWidth="1.600">
          <path d="M1 6.500h4L10 2v16l-5-4.500H1zM13 6.500c2 2 2 5 0 7" />
          <path d="M16 4c3.500 3.500 3.500 8.500 0 12M19 1.500c5 5 5 12 0 17" stroke="#9aa5ba" />
        </svg>
        <svg className="ml-3" width="25" height="16" viewBox="0 0 25 16" fill="none" stroke="#1a1a1a" strokeWidth="1.800">
          <rect x="1" y="1" width="19" height="14" rx="3" />
          <path d="M4 4h5v8H4z" fill="#1a1a1a" stroke="none" />
          <path d="M21.500 5.500l2.500 1v3l-2.500 1z" fill="#1a1a1a" />
        </svg>
        <div className="ml-6 text-right">
          <div>15:32</div>
          <div>31-10-2023</div>
        </div>
        <svg className="ml-[13px]" width="20" height="22" viewBox="0 0 20 22" fill="none" stroke="#1a1a1a" strokeWidth="1.600">
          <path d="M1.500 17.500l2-4.500V8c0-9 13-9 13 0v5l2 4.500zM7 18c1 3.500 5 3.500 6 0" />
        </svg>
      </div>
    </div>
  );
}

export default function App() {
  const [tab, setTab] = useState('Home');

  return (
    <div className="flex h-screen flex-col overflow-hidden bg-[#e4e7ef] font-['Open_Sans',sans-serif]">
      <TitleBar />
      <TabRow active={tab} onSelect={setTab} />
      <Ribbon />
      <TopRuler />
      <Workspace />
      <StatusBar />
      <Taskbar />
    </div>
  );
}
